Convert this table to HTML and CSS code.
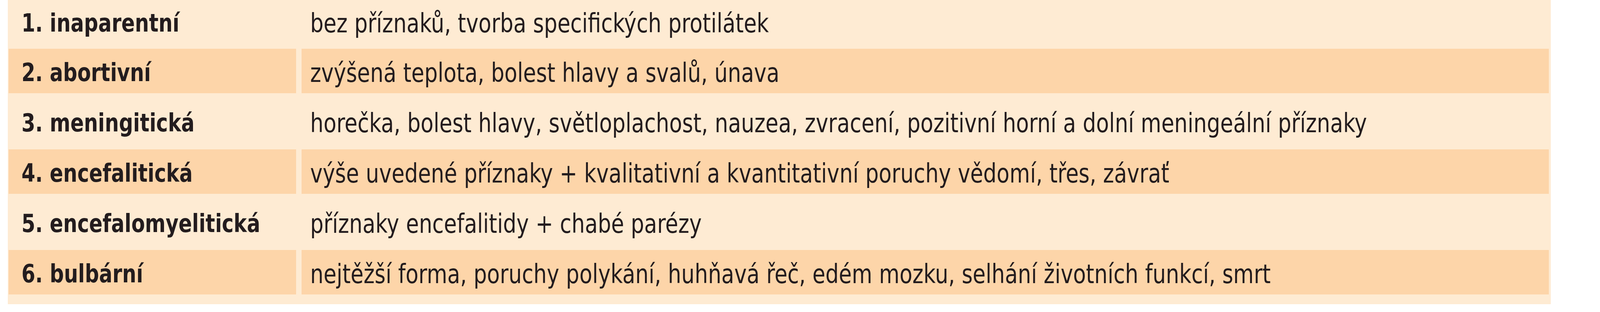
FILE: index.html
```html
<!DOCTYPE html>
<html lang="cs">
<head>
<meta charset="utf-8">
<title>Formy klíšťové encefalitidy</title>
<link rel="stylesheet" href="styles.css">
</head>
<body>
<div class="table">
  <div class="cell label light"><span class="txt">1. inaparentní</span></div>
  <div class="cell desc light"><span class="txt">bez příznaků, tvorba specifických protilátek</span></div>
  <div class="cell label dark"><span class="txt">2. abortivní</span></div>
  <div class="cell desc dark"><span class="txt">zvýšená teplota, bolest hlavy a svalů, únava</span></div>
  <div class="cell label light"><span class="txt">3. meningitická</span></div>
  <div class="cell desc light"><span class="txt">horečka, bolest hlavy, světloplachost, nauzea, zvracení, pozitivní horní a dolní meningeální příznaky</span></div>
  <div class="cell label dark"><span class="txt">4. encefalitická</span></div>
  <div class="cell desc dark"><span class="txt">výše uvedené příznaky + kvalitativní a kvantitativní poruchy vědomí, třes, závrať</span></div>
  <div class="cell label light"><span class="txt">5. encefalomyelitická</span></div>
  <div class="cell desc light"><span class="txt">příznaky encefalitidy + chabé parézy</span></div>
  <div class="cell label dark"><span class="txt">6. bulbární</span></div>
  <div class="cell desc dark"><span class="txt">nejtěžší forma, poruchy polykání, huhňavá řeč, edém mozku, selhání životních funkcí, smrt</span></div>
</div>
</body>
</html>
```

FILE: styles.css
```css
html, body {
  margin: 0;
  padding: 0;
  background: #ffffff;
}

body {
  font-family: "DejaVu Sans Condensed", "Liberation Sans Narrow", "Liberation Sans", sans-serif;
  font-stretch: condensed;
  color: #231c1e;
}

.table {
  display: grid;
  grid-template-columns: 17.98vw minmax(0, 1fr);
  grid-template-rows: 110px repeat(5, 114px);
  column-gap: 0.323vw;
  row-gap: 15px;
  box-sizing: border-box;
  margin: 0 3.08vw 0 0.495vw;
  padding: 0 0.11vw 25px 0.04vw;
  background: #feebd3;
}

.cell {
  display: flex;
  align-items: center;
  padding-top: 8px;
  box-sizing: border-box;
  white-space: nowrap;
  min-width: 0;
}

.light {
  background: #feebd3;
}

.dark {
  background: #fdd5a9;
}

.txt {
  display: inline-block;
  transform: scaleX(0.882);
  transform-origin: 0 50%;
}

.label {
  padding-left: 0.8vw;
  font-weight: bold;
  font-size: 64px;
}

.desc {
  padding-left: 0.54vw;
  font-weight: normal;
  font-size: 68px;
}
```
